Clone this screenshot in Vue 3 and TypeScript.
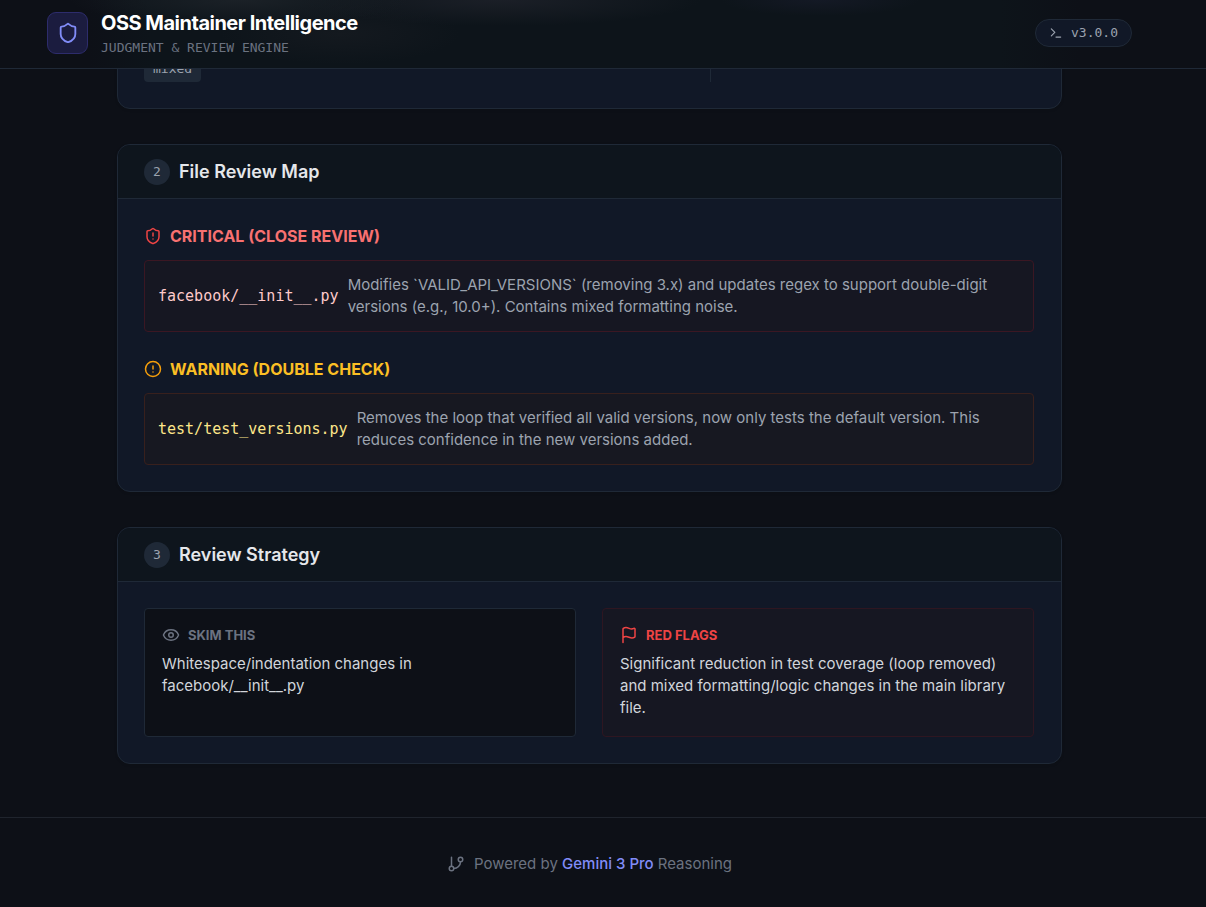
<script setup lang="ts">
interface FileReview {
  level: 'critical' | 'warning'
  title: string
  file: string
  note: string
}

interface StrategyNote {
  kind: 'skim' | 'flags'
  title: string
  text: string
}

const reviews: FileReview[] = [
  {
    level: 'critical',
    title: 'Critical (Close Review)',
    file: 'facebook/__init__.py',
    note: 'Modifies `VALID_API_VERSIONS` (removing 3.x) and updates regex to support double-digit versions (e.g., 10.0+). Contains mixed formatting noise.',
  },
  {
    level: 'warning',
    title: 'Warning (Double Check)',
    file: 'test/test_versions.py',
    note: 'Removes the loop that verified all valid versions, now only tests the default version. This reduces confidence in the new versions added.',
  },
]

const strategy: StrategyNote[] = [
  { kind: 'skim', title: 'Skim This', text: 'Whitespace/indentation changes in facebook/__init__.py' },
  {
    kind: 'flags',
    title: 'Red Flags',
    text: 'Significant reduction in test coverage (loop removed) and mixed formatting/logic changes in the main library file.',
  },
]
</script>

<template>
  <div class="page">
    <header class="topbar">
      <div class="brand">
        <div class="logo">
          <svg class="icon-logo" viewBox="0 0 24 24" aria-hidden="true">
            <path d="M20 13c0 5-3.5 7.5-7.66 8.95a1 1 0 0 1-.67-.01C7.5 20.5 4 18 4 13V6a1 1 0 0 1 1-1c2 0 4.5-1.2 6.24-2.72a1.17 1.17 0 0 1 1.52 0C14.51 3.81 17 5 19 5a1 1 0 0 1 1 1z" />
          </svg>
        </div>
        <div class="names">
          <h1>OSS Maintainer Intelligence</h1>
          <p class="tagline mono">Judgment &amp; Review Engine</p>
        </div>
      </div>
      <div class="version mono">
        <svg class="icon-small" viewBox="0 0 24 24" aria-hidden="true">
          <path d="m4 17 6-6-6-6M12 19h8" />
        </svg>
        <span>v3.0.0</span>
      </div>
    </header>

    <main>
      <section class="card summary">
        <div class="summary-main"><span class="chip mono">mixed</span></div>
        <div class="summary-side"></div>
      </section>

      <section class="card">
        <div class="card-head">
          <span class="step mono">2</span>
          <h2>File Review Map</h2>
        </div>
        <div class="card-body reviews">
          <div v-for="r in reviews" :key="r.level" :class="['review', r.level]">
            <h3>
              <svg class="icon" viewBox="0 0 24 24" aria-hidden="true">
                <path v-if="r.level === 'critical'" d="M20 13c0 5-3.5 7.5-7.66 8.95a1 1 0 0 1-.67-.01C7.5 20.5 4 18 4 13V6a1 1 0 0 1 1-1c2 0 4.5-1.2 6.24-2.72a1.17 1.17 0 0 1 1.52 0C14.51 3.81 17 5 19 5a1 1 0 0 1 1 1z" />
                <circle v-else cx="12" cy="12" r="10" />
                <path d="M12 8v4M12 16h.01" />
              </svg>
              {{ r.title }}
            </h3>
            <div class="file-row">
              <span class="file mono">{{ r.file }}</span>
              <p>{{ r.note }}</p>
            </div>
          </div>
        </div>
      </section>

      <section class="card">
        <div class="card-head">
          <span class="step mono">3</span>
          <h2>Review Strategy</h2>
        </div>
        <div class="card-body strategy">
          <div v-for="s in strategy" :key="s.kind" :class="['note', s.kind]">
            <h3>
              <svg class="icon" viewBox="0 0 24 24" aria-hidden="true">
                <template v-if="s.kind === 'skim'">
                  <path d="M2.062 12.348a1 1 0 0 1 0-.696 10.75 10.75 0 0 1 19.876 0 1 1 0 0 1 0 .696 10.75 10.75 0 0 1-19.876 0" />
                  <circle cx="12" cy="12" r="3" />
                </template>
                <path v-else d="M4 22V4a1 1 0 0 1 .4-.8A6 6 0 0 1 8 2c3 0 5 2 7.333 2q2 0 3.067-.8A1 1 0 0 1 20 4v10a1 1 0 0 1-.4.8A6 6 0 0 1 16 16c-3 0-5-2-8-2a6 6 0 0 0-4 1.528" />
              </svg>
              {{ s.title }}
            </h3>
            <p>{{ s.text }}</p>
          </div>
        </div>
      </section>
    </main>

    <footer>
      <svg class="icon" viewBox="0 0 24 24" aria-hidden="true">
        <path d="M6 3v12M18 9a9 9 0 0 1-9 9" />
        <circle cx="18" cy="6" r="3" />
        <circle cx="6" cy="18" r="3" />
      </svg>
      <p>Powered by <span class="model">Gemini 3 Pro</span> Reasoning</p>
    </footer>
  </div>
</template>

<style>
body {
  margin: 0;
  background: #0d1017;
}
</style>

<style scoped>
.page {
  font-family: Inter, "Liberation Sans", sans-serif;
  font-size: 15px;
  line-height: 22px;
  color: #d1d5db;
}

h1,
h2,
h3,
p {
  margin: 0;
}

.mono {
  font-family: "DejaVu Sans Mono", "Liberation Mono", monospace;
}

svg {
  flex: none;
  fill: none;
  stroke: currentColor;
  stroke-width: 2;
  stroke-linecap: round;
  stroke-linejoin: round;
}

.icon {
  width: 18px;
  height: 18px;
}

.icon-small {
  width: 14px;
  height: 14px;
}

.icon-logo {
  width: 22px;
  height: 22px;
}

.topbar {
  position: sticky;
  top: 0;
  z-index: 10;
  display: flex;
  align-items: center;
  justify-content: space-between;
  box-sizing: border-box;
  height: 69px;
  padding: 0 74px 3px 47px;
  border-bottom: 1px solid #1f2937;
  background:
    radial-gradient(ellipse 170px 26px at 240px 0, #1b2127, transparent),
    radial-gradient(ellipse 200px 26px at 500px 0, #1b1f27, transparent),
    radial-gradient(ellipse 120px 30px at 340px 34px, #14191f, transparent),
    radial-gradient(ellipse 100px 16px at 820px 0, #141925, transparent),
    linear-gradient(90deg, #0d1017 90px, #0d141a 150px, #0d141a 1000px, #0d1017 1080px);
}

.brand {
  display: flex;
  align-items: center;
  gap: 13px;
}

.logo {
  display: grid;
  place-items: center;
  box-sizing: border-box;
  width: 41px;
  height: 42px;
  border: 1px solid #2d2c6c;
  border-radius: 9px;
  background: #1b1c3f;
  color: #818cf8;
}

.names {
  display: grid;
  gap: 2px;
}

h1 {
  font-size: 20px;
  font-weight: 700;
  line-height: 28px;
  letter-spacing: -0.025em;
  color: #fff;
}

.tagline {
  font-size: 13px;
  line-height: 18px;
  text-transform: uppercase;
  color: #6b7280;
}

.version {
  display: flex;
  align-items: center;
  gap: 8px;
  padding: 4px 13px;
  border: 1px solid #1f2937;
  border-radius: 14px;
  background: #111827;
  font-size: 13px;
  line-height: 18px;
  color: #9ca3af;
}

main {
  display: grid;
  gap: 35px;
  max-width: 945px;
  margin-top: -29px;
  padding: 0 144px 53px 117px;
}

@media (min-width: 1206px) {
  main {
    margin-left: auto;
    margin-right: auto;
  }
}

.card {
  overflow: hidden;
  border: 1px solid #1f2937;
  border-radius: 13px;
  background: #111827;
  box-shadow: 0 1px 3px rgba(0, 0, 0, 0.1);
}

.summary {
  display: grid;
  grid-template-columns: 7fr 4fr;
  padding: 15px 27px 26px 26px;
}

.summary-side {
  border-left: 1px solid #1f2937;
}

.chip {
  display: inline-block;
  padding: 4px 9px;
  border-radius: 4px;
  background: #1f2937;
  font-size: 13px;
  line-height: 18px;
  color: #9ca3af;
  vertical-align: top;
}

.card-head {
  display: flex;
  align-items: center;
  gap: 9px;
  height: 53px;
  padding: 0 26px;
  border-bottom: 1px solid #1f2937;
  background: #0e151d;
}

.step {
  width: 26px;
  height: 26px;
  border-radius: 50%;
  background: #1f2937;
  font-size: 13px;
  line-height: 26px;
  text-align: center;
  color: #9ca3af;
}

h2 {
  font-size: 18px;
  font-weight: 600;
  line-height: 26px;
  color: #e5e7eb;
}

.card-body {
  display: grid;
  gap: 26px;
  padding: 26px 27px 26px 26px;
}

h3 {
  display: flex;
  align-items: center;
  gap: 8px;
  text-transform: uppercase;
}

.review h3 {
  margin-bottom: 13px;
  font-size: 16px;
  font-weight: 700;
  line-height: 22px;
}

.critical h3 {
  color: #f87171;
}

.critical .icon {
  color: #ef4444;
}

.warning h3 {
  color: #fbbf24;
}

.warning .icon {
  color: #f59e0b;
}

.file-row {
  display: flex;
  align-items: center;
  gap: 9px;
  padding: 13px;
  border: 1px solid;
  border-radius: 4px;
  color: #9ca3af;
}

.critical .file-row {
  border-color: #3b1723;
  background: #161722;
}

.warning .file-row {
  border-color: #38201d;
  background: #171821;
}

.critical .file {
  color: #fecaca;
}

.warning .file {
  color: #fde68a;
}

.strategy {
  grid-template-columns: 1fr 1fr;
}

.note {
  padding: 17px 20px 17px 17px;
  border: 1px solid #1f2937;
  border-radius: 4px;
  background: #0d1017;
}

.note h3 {
  margin-bottom: 9px;
  font-size: 13px;
  font-weight: 700;
  line-height: 18px;
  color: #6b7280;
}

.note.flags {
  border-color: #2e1621;
  background: #161722;
}

.note.flags h3 {
  color: #ef4444;
}

footer {
  display: flex;
  align-items: center;
  justify-content: center;
  gap: 9px;
  padding: 35px 27px 32px 0;
  border-top: 1px solid #1f242d;
  color: #6b7280;
}

.model {
  font-weight: 500;
  color: #818cf8;
}
</style>
